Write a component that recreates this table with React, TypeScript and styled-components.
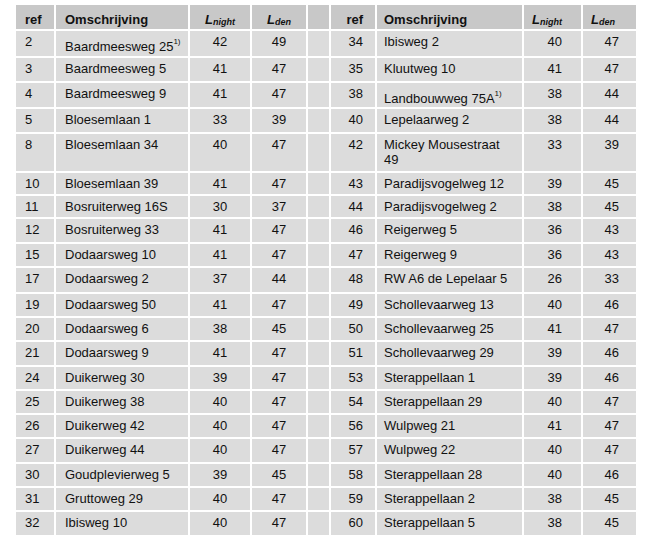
import React from "react";
import styled, { createGlobalStyle, css } from "styled-components";

const GlobalStyle = createGlobalStyle`
  html, body { margin: 0; padding: 0; background: #ffffff; }
  body { font-family: "Liberation Sans", Arial, sans-serif; }
`;

type Side = "l" | "r";
interface CellProps {
  $head?: boolean;
  $side?: Side;
  $den?: boolean;
}

const Page = styled.div`
  padding: 5px 0 0 16px;
`;

const Table = styled.table`
  border-collapse: separate;
  border-spacing: 0;
  table-layout: fixed;
  width: 620px;
  font-family: "Liberation Sans", Arial, sans-serif;
  font-size: 13px;
  line-height: 15px;
  color: #111111;
`;

const Col = styled.col<{ $w: number }>`
  width: ${(p) => p.$w}px;
`;

const HeadRow = styled.tr`
  height: 26px;
`;

const BodyRow = styled.tr<{ $h: number }>`
  height: ${(p) => p.$h}px;
`;

const cellBase = css<CellProps>`
  box-sizing: border-box;
  padding: ${(p) => (p.$head ? "0 0 2px" : "3px 0 0")};
  border-right: 2px solid #ffffff;
  border-bottom: 2px solid #ffffff;
  background: ${(p) => (p.$head ? "#c8c8c8" : "#dcdcdc")};
  font-weight: ${(p) => (p.$head ? 700 : 400)};
  vertical-align: ${(p) => (p.$head ? "bottom" : "top")};
  white-space: nowrap;
  overflow: hidden;
  &:last-child {
    border-right: 0;
  }
  tbody tr:last-child > & {
    border-bottom: 0;
  }
`;

const RefCell = styled.td<CellProps>`
  ${cellBase};
  text-align: ${(p) => (p.$side === "r" ? "right" : "left")};
  padding-left: ${(p) => (p.$side === "r" ? 0 : 9)}px;
  padding-right: ${(p) => (p.$side === "r" ? 12 : 0)}px;
`;

const DescCell = styled.td<CellProps>`
  ${cellBase};
  text-align: left;
  white-space: ${(p) => (p.$head ? "nowrap" : "normal")};
  padding-left: ${(p) => (p.$side === "r" ? 7 : 9)}px;
  padding-right: 6px;
`;

const LevelCell = styled.td<CellProps>`
  ${cellBase};
  text-align: ${(p) => (p.$side === "l" ? "center" : p.$head ? "left" : "right")};
  padding-left: ${(p) => (p.$side === "r" && p.$head ? 8 : 0)}px;
  padding-right: ${(p) => (p.$side === "r" && !p.$head ? (p.$den ? 17 : 19) : 0)}px;
`;

const GapCell = styled.td<CellProps>`
  ${cellBase};
`;

const Sym = styled.span`
  font-style: italic;
`;

const Sub = styled.span`
  font-size: 9px;
  line-height: 1;
  vertical-align: -1px;
`;

const Sup = styled.sup`
  font-size: 8px;
  line-height: 16px;
  vertical-align: 7px;
`;

type Entry = { ref: string; name: string; note?: boolean; night: string; den: string };
type Row = { h: number; l: Entry; r: Entry };

const e = (ref: string, name: string, night: string, den: string, note?: boolean): Entry => ({
  ref,
  name,
  night,
  den,
  note,
});

const rows: Row[] = [
  { h: 27, l: e("2", "Baardmeesweg 25", "42", "49", true), r: e("34", "Ibisweg 2", "40", "47") },
  { h: 25, l: e("3", "Baardmeesweg 5", "41", "47"), r: e("35", "Kluutweg 10", "41", "47") },
  { h: 26, l: e("4", "Baardmeesweg 9", "41", "47"), r: e("38", "Landbouwweg 75A", "38", "44", true) },
  { h: 25, l: e("5", "Bloesemlaan 1", "33", "39"), r: e("40", "Lepelaarweg 2", "38", "44") },
  { h: 39, l: e("8", "Bloesemlaan 34", "40", "47"), r: e("42", "Mickey Mousestraat 49", "33", "39") },
  { h: 23, l: e("10", "Bloesemlaan 39", "41", "47"), r: e("43", "Paradijsvogelweg 12", "39", "45") },
  { h: 23, l: e("11", "Bosruiterweg 16S", "30", "37"), r: e("44", "Paradijsvogelweg 2", "38", "45") },
  { h: 25, l: e("12", "Bosruiterweg 33", "41", "47"), r: e("46", "Reigerweg 5", "36", "43") },
  { h: 24, l: e("15", "Dodaarsweg 10", "41", "47"), r: e("47", "Reigerweg 9", "36", "43") },
  { h: 26, l: e("17", "Dodaarsweg 2", "37", "44"), r: e("48", "RW A6 de Lepelaar 5", "26", "33") },
  { h: 24, l: e("19", "Dodaarsweg 50", "41", "47"), r: e("49", "Schollevaarweg 13", "40", "46") },
  { h: 24, l: e("20", "Dodaarsweg 6", "38", "45"), r: e("50", "Schollevaarweg 25", "41", "47") },
  { h: 25, l: e("21", "Dodaarsweg 9", "41", "47"), r: e("51", "Schollevaarweg 29", "39", "46") },
  { h: 24, l: e("24", "Duikerweg 30", "39", "47"), r: e("53", "Sterappellaan 1", "39", "46") },
  { h: 24, l: e("25", "Duikerweg 38", "40", "47"), r: e("54", "Sterappellaan 29", "40", "47") },
  { h: 24, l: e("26", "Duikerweg 42", "40", "47"), r: e("56", "Wulpweg 21", "41", "47") },
  { h: 25, l: e("27", "Duikerweg 44", "40", "47"), r: e("57", "Wulpweg 22", "40", "47") },
  { h: 24, l: e("30", "Goudplevierweg 5", "39", "45"), r: e("58", "Sterappellaan 28", "40", "46") },
  { h: 24, l: e("31", "Gruttoweg 29", "40", "47"), r: e("59", "Sterappellaan 2", "38", "45") },
  { h: 23, l: e("32", "Ibisweg 10", "40", "47"), r: e("60", "Sterappellaan 5", "38", "45") },
];

const widths = [40, 134, 62, 56, 23, 46, 147, 59, 53];

const HeadGroup = ({ side }: { side: Side }) => (
  <>
    <RefCell as="th" $head $side={side}>ref</RefCell>
    <DescCell as="th" $head $side={side}>Omschrijving</DescCell>
    <LevelCell as="th" $head $side={side}>
      <Sym>L<Sub>night</Sub></Sym>
    </LevelCell>
    <LevelCell as="th" $head $side={side} $den>
      <Sym>L<Sub>den</Sub></Sym>
    </LevelCell>
  </>
);

const EntryCells = ({ item, side }: { item: Entry; side: Side }) => (
  <>
    <RefCell $side={side}>{item.ref}</RefCell>
    <DescCell $side={side}>
      {item.name}
      {item.note && <Sup>1)</Sup>}
    </DescCell>
    <LevelCell $side={side}>{item.night}</LevelCell>
    <LevelCell $side={side} $den>{item.den}</LevelCell>
  </>
);

export default function App() {
  return (
    <>
      <GlobalStyle />
      <Page>
        <Table>
          <colgroup>
            {widths.map((w, i) => (
              <Col key={i} $w={w} />
            ))}
          </colgroup>
          <thead>
            <HeadRow>
              <HeadGroup side="l" />
              <GapCell as="th" $head />
              <HeadGroup side="r" />
            </HeadRow>
          </thead>
          <tbody>
            {rows.map((row) => (
              <BodyRow key={row.l.ref} $h={row.h}>
                <EntryCells item={row.l} side="l" />
                <GapCell />
                <EntryCells item={row.r} side="r" />
              </BodyRow>
            ))}
          </tbody>
        </Table>
      </Page>
    </>
  );
}
